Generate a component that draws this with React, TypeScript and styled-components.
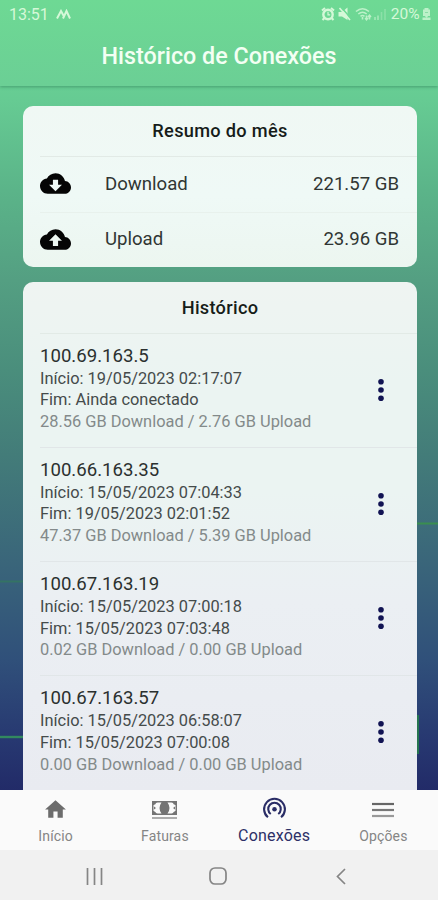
import React from "react";
import styled, { createGlobalStyle } from "styled-components";

const GlobalStyle = createGlobalStyle`
  * { box-sizing: border-box; }
  html, body { margin: 0; padding: 0; }
  body { font-family: Roboto, "Liberation Sans", sans-serif; overflow: hidden; }
  svg { display: block; flex: none; }
`;

const Screen = styled.div`
  position: relative;
  width: 438px;
  height: 900px;
  display: flex;
  flex-direction: column;
  overflow: hidden;
  background: linear-gradient(
    180deg,
    #6ed994 0,
    #6ad494 50px,
    #66cb93 100px,
    #5bb489 190px,
    #549f82 280px,
    #4a8e7c 370px,
    #437c79 455px,
    #3a667a 560px,
    #30507a 660px,
    #273871 740px,
    #222b68 790px
  );
`;

const Header = styled.header`
  flex: none;
  height: 86px;
  color: #f3fff3;
  background: linear-gradient(180deg, #6ed994, #6bcf95);
  box-shadow: 0 1px 3px rgba(20, 90, 60, 0.4);
`;

const StatusBar = styled.div`
  height: 28px;
  padding: 0 7px 0 9px;
  display: flex;
  align-items: center;
  color: #d5f8d8;
  font-size: 16px;
`;

const Clock = styled.span`
  width: 39px;
  margin-right: 8px;
`;

const StatusIcons = styled.div`
  margin-left: auto;
  display: flex;
  align-items: center;
  gap: 2.5px;
`;

const Battery = styled.span`
  margin-left: 1px;
  font-size: 15.5px;
  letter-spacing: 0;
`;

const PageTitle = styled.h1`
  margin: 0;
  height: 56px;
  font-size: 23.3px;
  line-height: 56px;
  font-weight: 500;
  text-align: center;
`;

const Content = styled.main`
  flex: 1;
  min-height: 0;
  display: flex;
  flex-direction: column;
  gap: 15px;
  padding: 20px 21px 0 23px;
  overflow: hidden;
`;

const Card = styled.section<{ $open?: boolean }>`
  flex: ${(p) => (p.$open ? "1" : "none")};
  min-height: 0;
  overflow: hidden;
  border-radius: ${(p) => (p.$open ? "10px 10px 0 0" : "10px")};
  background: ${(p) =>
    p.$open
      ? "linear-gradient(180deg, #eff4f2 0, #ebf4f2 100px, #ebf4f2 210px, #ebeff3 320px, #e9ebf1 508px)"
      : "linear-gradient(180deg, #f0f8f4 0, #eff9f6 90px, #ecf6f0 161px)"};
`;

const CardTitle = styled.h2<{ $tall?: boolean }>`
  margin: 0 0 0 17px;
  height: ${(p) => (p.$tall ? "51.6px" : "51px")};
  padding-right: 17px;
  font-size: 18.2px;
  line-height: ${(p) => (p.$tall ? "52px" : "50px")};
  font-weight: 500;
  letter-spacing: 0.3px;
  text-align: center;
  color: #161c19;
  border-bottom: 1px solid #e2eae6;
`;

const UsageRow = styled.div`
  height: 55px;
  margin-left: 17px;
  padding: 0 18px 2px 0;
  display: flex;
  align-items: center;
  font-size: 18.6px;
  color: #303633;
  & + & { border-top: 1px solid #e8f1ec; }
`;

const UsageLabel = styled.span`
  margin-left: 34px;
  flex: 1;
`;

const Session = styled.article`
  height: 114.3px;
  margin-left: 17px;
  padding: 10px 23px 0 0;
  display: flex;
  border-bottom: 1px solid #e1e6e8;
  &:last-child { border-bottom: 0; }
`;

const SessionInfo = styled.div`
  flex: 1;
  white-space: nowrap;
`;

const Address = styled.div`
  height: 24px;
  line-height: 24px;
  font-size: 18.6px;
  color: #2b302f;
`;

const Detail = styled.div<{ $muted?: boolean }>`
  height: 21.6px;
  line-height: 22px;
  font-size: 16.4px;
  color: ${(p) => (p.$muted ? "#838a8a" : "#454b4b")};
`;

const MenuButton = styled.button`
  width: 26px;
  height: 92px;
  padding: 0;
  border: 0;
  background: none;
  display: flex;
  align-items: center;
  justify-content: center;
`;

const TabBar = styled.nav`
  flex: none;
  height: 60px;
  padding-left: 1px;
  display: grid;
  grid-template-columns: repeat(4, 1fr);
  background: #fafafa;
`;

const Tab = styled.a<{ $active?: boolean }>`
  display: flex;
  flex-direction: column;
  align-items: center;
  color: ${(p) => (p.$active ? "#2d3067" : "#858585")};
  font-size: ${(p) => (p.$active ? "16px" : "14px")};
  letter-spacing: ${(p) => (p.$active ? "0.2px" : "0.15px")};
`;

const TabIcon = styled.span`
  height: 36px;
  display: flex;
  align-items: center;
  padding-top: 3px;
`;

const TabLabel = styled.span`
  line-height: 20px;
`;

const SystemBar = styled.div`
  flex: none;
  height: 50px;
  padding: 2px 36px 0 33px;
  display: grid;
  grid-template-columns: repeat(3, 1fr);
  place-items: center;
  background: #f1f1f1;
`;

const Trace = styled.svg<{ $side: "left" | "right" }>`
  position: absolute;
  top: 520px;
  ${(p) => p.$side}: 0;
`;

function CloudIcon({ up }: { up?: boolean }) {
  return (
    <svg width="31" height="31" viewBox="0 0 24 24" fill="#050505">
      <path
        d={
          up
            ? "M19.35 10.04C18.67 6.59 15.64 4 12 4 9.11 4 6.6 5.64 5.35 8.04 2.34 8.36 0 10.91 0 14c0 3.31 2.69 6 6 6h13c2.76 0 5-2.24 5-5 0-2.64-2.05-4.78-4.65-4.96zM14 13v4h-4v-4H7l5-5 5 5h-3z"
            : "M19.35 10.04C18.67 6.59 15.64 4 12 4 9.11 4 6.6 5.64 5.35 8.04 2.34 8.36 0 10.91 0 14c0 3.31 2.69 6 6 6h13c2.76 0 5-2.24 5-5 0-2.64-2.05-4.78-4.65-4.96zM17 13l-5 5-5-5h3V9h4v4h3z"
        }
      />
    </svg>
  );
}

const sessions = [
  { ip: "100.69.163.5", start: "19/05/2023 02:17:07", end: "Ainda conectado", down: "28.56", up: "2.76" },
  { ip: "100.66.163.35", start: "15/05/2023 07:04:33", end: "19/05/2023 02:01:52", down: "47.37", up: "5.39" },
  { ip: "100.67.163.19", start: "15/05/2023 07:00:18", end: "15/05/2023 07:03:48", down: "0.02", up: "0.00" },
  { ip: "100.67.163.57", start: "15/05/2023 06:58:07", end: "15/05/2023 07:00:08", down: "0.00", up: "0.00" },
];

export default function App() {
  return (
    <>
      <GlobalStyle />
      <Screen>
        <Trace $side="left" width="23" height="270" viewBox="0 0 23 270" fill="none">
          <path d="M0 61.5H23" stroke="#347364" strokeWidth="2" />
          <path d="M0 217H23" stroke="#32895f" strokeWidth="2.4" />
        </Trace>
        <Trace $side="right" width="21" height="270" viewBox="0 0 21 270" fill="none">
          <path d="M0 3.5H21" stroke="#3a8e50" strokeWidth="2" />
          <path d="M1 195V234" stroke="#257550" strokeWidth="2" />
        </Trace>

        <Header>
          <StatusBar>
            <Clock>13:51</Clock>
            <svg width="15" height="11" viewBox="0 0 15 11" fill="none" stroke="#d5f8d8" strokeWidth="2">
              <path d="M1 9.5L5 2l3 5.5M7 9.5L10.5 2 14 9.5" />
            </svg>
            <StatusIcons>
              <svg width="14" height="14" viewBox="0 0 14 14" fill="none" stroke="#d5f8d8">
                <circle cx="7" cy="7.5" r="4.7" strokeWidth="2.4" />
                <path d="M1 3.5L4 1M10 1l3 2.5M3.2 11.2L1.5 13M10.8 11.2l1.7 1.8" strokeWidth="2" />
                <path d="M7 4.8v3h2.2" strokeWidth="1.2" />
              </svg>
              <svg width="15" height="14" viewBox="0 0 15 14">
                <path d="M1.500 5h3.500l5.500-4.500v12.500L5 9.500H1.500z" fill="#d5f8d8" />
                <path d="M4.500 0.500l9 10.500" stroke="#6eda95" strokeWidth="1.600" />
                <path d="M2.500 1l10.500 12" stroke="#d5f8d8" strokeWidth="1.600" />
              </svg>
              <svg width="17" height="14" viewBox="0 0 17 14" fill="none" stroke="#bdf1c9" strokeWidth="1.6">
                <path d="M1 4.5Q7.5-1 14 4.5M3.3 7Q7.5 3.5 11.7 7M5.5 9.3q2-1.6 4 0M7.5 10v2.5M11.5 8.5v4M14.5 8.5v4M10.2 11l1.3 1.7L13 11M13 10l1.5-1.7L16 10" />
              </svg>
              <svg width="13" height="12" viewBox="0 0 13 12" stroke="#a4e9b8" strokeWidth="1.6">
                <path d="M1 12V9M4 12V7.5" />
                <path d="M7.5 12V4M11 12V1" opacity=".55" />
              </svg>
              <Battery>20%</Battery>
              <svg width="9" height="14" viewBox="0 0 9 14">
                <path d="M2.500 1h4v1.500h1.500V9H1V2.500h1.500zM0.500 10.500h8V13h-8z" fill="#bdf1c9" />
                <path d="M2 8l2.500 3L7 8z" fill="#bdf1c9" />
                <path d="M3 5.500h3" stroke="#8bdca6" />
              </svg>
            </StatusIcons>
          </StatusBar>
          <PageTitle>Histórico de Conexões</PageTitle>
        </Header>

        <Content>
          <Card>
            <CardTitle>Resumo do mês</CardTitle>
            <UsageRow>
              <CloudIcon />
              <UsageLabel>Download</UsageLabel>
              <span>221.57 GB</span>
            </UsageRow>
            <UsageRow>
              <CloudIcon up />
              <UsageLabel>Upload</UsageLabel>
              <span>23.96 GB</span>
            </UsageRow>
          </Card>

          <Card $open>
            <CardTitle $tall>Histórico</CardTitle>
            {sessions.map((s) => (
              <Session key={s.ip}>
                <SessionInfo>
                  <Address>{s.ip}</Address>
                  <Detail>Início: {s.start}</Detail>
                  <Detail>Fim: {s.end}</Detail>
                  <Detail $muted>
                    {s.down} GB Download / {s.up} GB Upload
                  </Detail>
                </SessionInfo>
                <MenuButton aria-label="Mais opções">
                  <svg width="6" height="24" viewBox="0 0 6 24" fill="#111353">
                    <circle cx="3" cy="3.7" r="2.8" />
                    <circle cx="3" cy="12" r="2.8" />
                    <circle cx="3" cy="20.3" r="2.8" />
                  </svg>
                </MenuButton>
              </Session>
            ))}
          </Card>
        </Content>

        <TabBar>
          <Tab>
            <TabIcon>
              <svg width="25" height="25" viewBox="0 0 24 24" fill="#6c6c6c">
                <path d="M10 20v-6h4v6h5v-8h3L12 3 2 12h3v8z" />
              </svg>
            </TabIcon>
            <TabLabel>Início</TabLabel>
          </Tab>
          <Tab>
            <TabIcon>
              <svg width="25" height="20" viewBox="0 0 25 20">
                <path d="M0 1h25v14H0z" fill="#747474" />
                <path d="M4 2.500h5.500Q5.500 8 9.500 13.500H4Q4 11.500 1.500 11V5Q4 4.500 4 2.500zM21 2.500h-5.500q4 5.500 0 11H21q0-2 2.500-2.500V5Q21 4.500 21 2.500z" fill="#fafafa" />
                <path d="M1 5l4.500-3H1zM1 11l4.500 3H1zM24 5l-4.500-3H24zM24 11l-4.500 3H24zM2 6.500v3l2-1.500zM23 6.500v3L21 8z" fill="#747474" />
                <path d="M0 18h25" stroke="#999" strokeWidth="1.600" />
              </svg>
            </TabIcon>
            <TabLabel>Faturas</TabLabel>
          </Tab>
          <Tab $active>
            <TabIcon>
              <svg width="25" height="25" viewBox="0 0 24 24" fill="none" stroke="#2a2d66" strokeWidth="2">
                <path d="M5.700 19.500A10 10 0 1 1 18.300 19.500M8.400 16.300A6 6 0 1 1 15.600 16.300" />
                <circle cx="12" cy="11.700" r="2.200" fill="#2a2d66" stroke="none" />
              </svg>
            </TabIcon>
            <TabLabel>Conexões</TabLabel>
          </Tab>
          <Tab>
            <TabIcon>
              <svg width="22" height="16" viewBox="0 0 22 16" strokeWidth="2.200">
                <path d="M0 2h22" stroke="#666" />
                <path d="M0 8h22" stroke="#777" />
                <path d="M0 14h22" stroke="#999" />
              </svg>
            </TabIcon>
            <TabLabel>Opções</TabLabel>
          </Tab>
        </TabBar>

        <SystemBar>
          <svg width="17" height="17" viewBox="0 0 17 17" stroke="#858585" strokeWidth="1.700">
            <path d="M1.500 0v17M8.500 0v17M15.500 0v17" />
          </svg>
          <svg width="18" height="18" viewBox="0 0 18 18" fill="none" stroke="#858585" strokeWidth="1.700">
            <rect x="1" y="1" width="16" height="16" rx="5" />
          </svg>
          <svg width="10" height="17" viewBox="0 0 10 17" fill="none" stroke="#858585" strokeWidth="1.700">
            <path d="M9 1L1.500 8.500 9 16" />
          </svg>
        </SystemBar>
      </Screen>
    </>
  );
}
